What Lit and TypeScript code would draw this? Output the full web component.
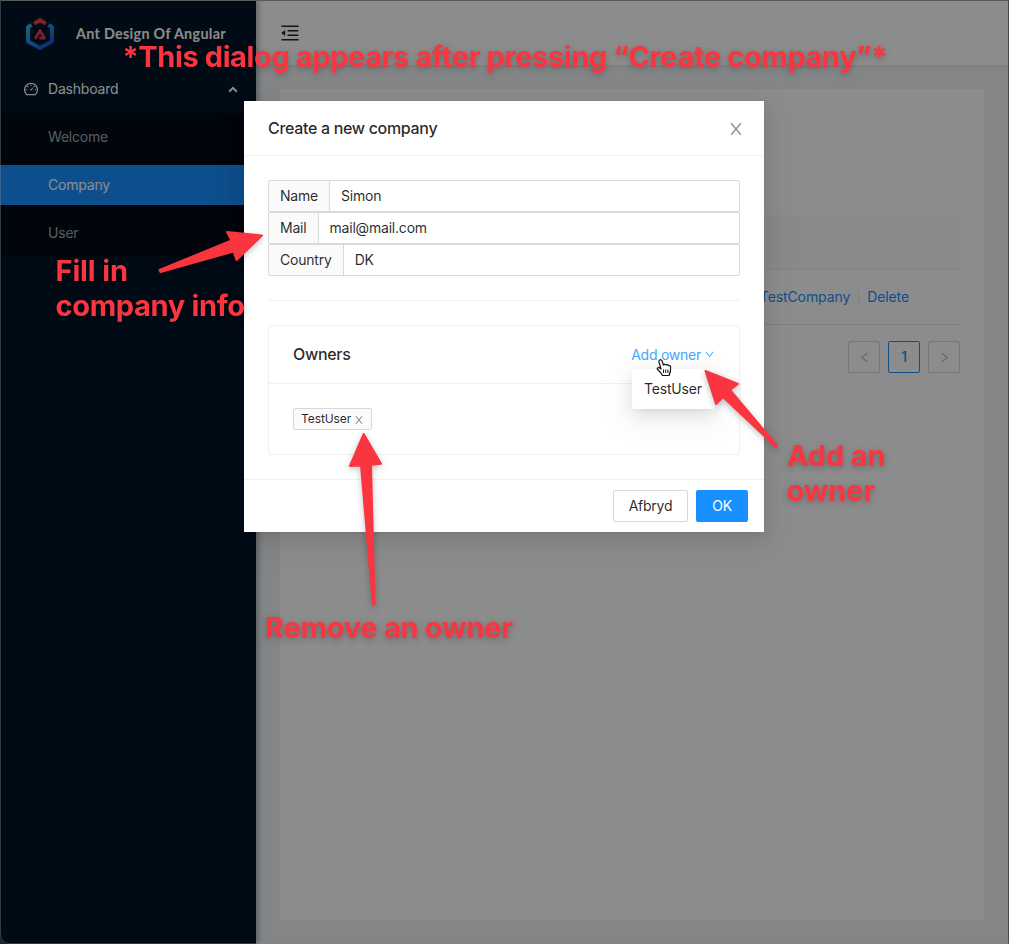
import { LitElement, html, css, svg } from "lit";
import { customElement, state } from "lit/decorators.js";

const ICONS = {
  fold: "M408 442h480c4.400 0 8-3.600 8-8v-56c0-4.400-3.600-8-8-8H408c-4.400 0-8 3.600-8 8v56c0 4.400 3.600 8 8 8zm-8 204c0 4.400 3.600 8 8 8h480c4.400 0 8-3.600 8-8v-56c0-4.400-3.600-8-8-8H408c-4.400 0-8 3.600-8 8v56zm504-486H120c-4.400 0-8 3.600-8 8v56c0 4.400 3.600 8 8 8h784c4.400 0 8-3.600 8-8v-56c0-4.400-3.600-8-8-8zm0 632H120c-4.400 0-8 3.600-8 8v56c0 4.400 3.600 8 8 8h784c4.400 0 8-3.600 8-8v-56c0-4.400-3.600-8-8-8zM115.400 518.900L271.700 642c5.800 4.600 14.400.5 14.400-6.900V388.900c0-7.400-8.500-11.500-14.400-6.900L115.400 505.100a8.740 8.740 0 000 13.800z",
  dashboard: "M924.8 385.6a446.7 446.7 0 00-96-142.4 446.7 446.7 0 00-142.4-96C631.1 123.8 572.5 112 512 112s-119.1 11.8-174.4 35.2a446.7 446.7 0 00-142.4 96 446.7 446.7 0 00-96 142.4C75.8 440.9 64 499.5 64 560c0 132.7 58.3 257.7 159.9 343.1l1.7 1.4c5.8 4.8 13.1 7.5 20.6 7.5h531.7c7.5 0 14.8-2.7 20.6-7.5l1.7-1.4C901.7 817.7 960 692.7 960 560c0-60.5-11.9-119.1-35.2-174.4zM761.4 836H262.6A371.12 371.12 0 01140 560c0-99.4 38.7-192.8 109-263 70.3-70.3 163.7-109 263-109 99.4 0 192.8 38.7 263 109 70.3 70.3 109 163.7 109 263 0 105.6-44.5 205.5-122.6 276zM623.5 421.5a8.03 8.03 0 00-11.3 0L527.7 506c-18.7-5-39.4-.2-54.1 14.5a55.95 55.95 0 000 79.2 55.95 55.95 0 0079.2 0 55.87 55.87 0 0014.5-54.1l84.5-84.5c3.1-3.1 3.1-8.2 0-11.3l-28.3-28.3zM490 320h44c4.4 0 8-3.6 8-8v-80c0-4.4-3.6-8-8-8h-44c-4.4 0-8 3.6-8 8v80c0 4.4 3.6 8 8 8zm260 218v44c0 4.4 3.6 8 8 8h80c4.4 0 8-3.6 8-8v-44c0-4.4-3.6-8-8-8h-80c-4.4 0-8 3.6-8 8zm12.7-197.2l-31.1-31.1a8.03 8.03 0 00-11.3 0l-56.6 56.6a8.03 8.03 0 000 11.3l31.1 31.1c3.1 3.1 8.2 3.1 11.3 0l56.6-56.6c3.1-3.1 3.1-8.2 0-11.3zm-458.6-31.1a8.03 8.03 0 00-11.3 0l-31.1 31.1a8.03 8.03 0 000 11.3l56.6 56.6c3.1 3.1 8.2 3.1 11.3 0l31.1-31.1c3.1-3.1 3.1-8.2 0-11.3l-56.6-56.6zM262 530h-80c-4.4 0-8 3.6-8 8v44c0 4.4 3.6 8 8 8h80c4.4 0 8-3.6 8-8v-44c0-4.4-3.6-8-8-8z",
  close: "M563.8 512l262.5-312.9c4.4-5.2.7-13.1-6.1-13.1h-79.8c-4.7 0-9.2 2.1-12.3 5.7L511.6 449.8 295.1 191.7c-3-3.6-7.5-5.7-12.3-5.7H203c-6.8 0-10.5 7.9-6.1 13.1L459.4 512 196.9 824.9A7.95 7.95 0 00203 838h79.8c4.7 0 9.2-2.1 12.3-5.7l216.5-258.1 216.5 258.1c3 3.6 7.5 5.7 12.3 5.7h79.8c6.8 0 10.5-7.9 6.1-13.1L563.8 512z",
  down: "M884 256h-75c-5.1 0-9.9 2.5-12.9 6.6L512 654.2 227.9 262.6c-3-4.1-7.8-6.6-12.9-6.6h-75c-6.5 0-10.3 7.4-6.5 12.7l352.6 486.1c12.8 17.6 39 17.6 51.7 0l352.6-486.1c3.9-5.3.1-12.7-6.4-12.7z",
  left: "M724 218.3V141c0-6.7-7.7-10.4-12.9-6.3L260.3 486.8a31.86 31.86 0 000 50.3l450.8 352.1c5.3 4.1 12.9.4 12.9-6.3v-77.3c0-4.9-2.3-9.6-6.1-12.6l-360-281 360-281.1c3.8-3 6.1-7.7 6.1-12.6z",
};

const icon = (name: keyof typeof ICONS, size: number, cls = "") => html`
  <svg class="icon ${cls}" width=${size} height=${size} viewBox="0 0 1024 1024" fill="currentColor">
    <path d=${ICONS[name]}></path>
  </svg>`;

const base = css`
  * { box-sizing: border-box; }
  .icon { display: block; flex: none; }
`;

@customElement("side-menu")
class SideMenu extends LitElement {
  static styles = [base, css`
    :host {
      display: block; width: 256px; flex: none; background: #001529; padding-top: 1px;
      box-shadow: 2px 0 6px rgba(0, 21, 41, 0.35); z-index: 2; position: relative; color: #fff;
    }
    .brand { display: flex; align-items: center; height: 64px; padding-left: 24px; }
    .name { margin-left: 20px; padding-top: 1px; font: 700 14.300px/20px Lato, sans-serif; letter-spacing: 0.320px; white-space: nowrap; }
    .group { display: flex; align-items: center; height: 40px; margin: 4px 0; padding: 0 17px 0 23px; }
    .group span { flex: 1; margin-left: 9px; }
    .sub { background: #000c17; padding: 4px 0; display: grid; gap: 8px; }
    .item { height: 40px; line-height: 40px; padding-left: 48px; color: rgba(255, 255, 255, 0.65); }
    .item.active { background: #1890ff; color: #fff; }
  `];
  items = ["Welcome", "Company", "User"];
  render() {
    return html`
      <div class="brand">
        <svg width="32" height="36" viewBox="0 0 32 36" fill="none" stroke-linecap="round" stroke-linejoin="round">
          <defs>
            <linearGradient id="g" x1="0" y1="0" x2="0.8" y2="1">
              <stop offset="0" stop-color="#24b8e6"></stop><stop offset="0.5" stop-color="#1890e8"></stop>
              <stop offset="1" stop-color="#0b52d0"></stop>
            </linearGradient>
          </defs>
          <path d="M7.500 10 L4 12 V26.500 L16 33 L28 26.500 V12 L24.500 10" stroke="url(#g)" stroke-width="4" stroke-linecap="butt"></path>
          <path d="M11.500 7.800 L16 5.300 L20.500 7.800" stroke="#e0454e" stroke-width="4"></path>
          <path d="M11.800 22.800 L16 15.500 L20.500 23 H16.500" stroke="#e0384a" stroke-width="2.800"></path>
        </svg>
        <div class="name">Ant Design Of Angular</div>
      </div>
      <div class="group">
        ${icon("dashboard", 16)}<span>Dashboard</span>
        <svg class="icon" width="12" height="8" viewBox="0 0 12 8"><path d="M2.200 6.700 L6 2.900 L9.800 6.700" fill="none" stroke="#fff" stroke-width="2"></path></svg>
      </div>
      <div class="sub">
        ${this.items.map((t) => html`<div class="item ${t === "Company" ? "active" : ""}">${t}</div>`)}
      </div>`;
  }
}

@customElement("company-page")
class CompanyPage extends LitElement {
  static styles = [base, css`
    :host { display: flex; flex-direction: column; flex: 1; background: #f0f2f5; }
    .top { height: 65px; padding-top: 1px; background: #fff; box-shadow: 0 1px 4px rgba(0, 21, 41, 0.08); display: flex; align-items: center; padding-left: 23px; color: rgba(0, 0, 0, 0.85); }
    .card { flex: 1; margin: 24px 25px 24px 24px; background: #fff; padding: 126px 24px 0; }
    .thead { height: 55px; background: #fafafa; border-bottom: 1px solid #f0f0f0; border-radius: 2px 2px 0 0; }
    .row { height: 55px; border-bottom: 1px solid #e8e8e8; display: flex; align-items: center; justify-content: flex-end; padding-right: 51px; color: #1890ff; letter-spacing: -0.100px; }
    .sep { width: 1px; height: 13px; background: rgba(0, 0, 0, 0.08); margin: 0 8px; }
    .pages { display: flex; justify-content: flex-end; gap: 8px; margin-top: 16px; }
    .page { width: 32px; height: 32px; border: 1px solid #d9d9d9; border-radius: 2px; display: grid; place-items: center; color: rgba(0, 0, 0, 0.3); }
    .page.on { border-color: #1890ff; color: #1890ff; font-weight: 500; }
    .flip { transform: scaleX(-1); }
  `];
  render() {
    return html`
      <div class="top">${icon("fold", 22)}</div>
      <div class="card">
        <div class="thead"></div>
        <div class="row"><span>TestCompany</span><i class="sep"></i><span>Delete</span></div>
        <div class="pages">
          <div class="page">${icon("left", 13)}</div>
          <div class="page on">1</div>
          <div class="page">${icon("left", 13, "flip")}</div>
        </div>
      </div>`;
  }
}

@customElement("company-dialog")
class CompanyDialog extends LitElement {
  static styles = [base, css`
    :host {
      display: block; width: 520px; background: #fff; color: rgba(0, 0, 0, 0.85);
      box-shadow: 0 3px 6px -4px rgba(0, 0, 0, 0.12), 0 6px 16px rgba(0, 0, 0, 0.08), 0 9px 28px 8px rgba(0, 0, 0, 0.05);
    }
    .head { display: flex; align-items: center; justify-content: space-between; height: 55px; padding: 0 19px 0 24px; border-bottom: 1px solid #f0f0f0; font-size: 16px; font-weight: 500; letter-spacing: -0.320px; }
    .head .icon { color: rgba(0, 0, 0, 0.45); margin-top: 2px; }
    .body { padding: 24px; }
    .field { display: flex; height: 32px; border: 1px solid #d9d9d9; border-radius: 2px; line-height: 30px; }
    .label { padding: 0 11px; background: #fafafa; border-right: 1px solid #d9d9d9; }
    .field input { flex: 1; min-width: 0; border: 0; outline: 0; padding: 0 11px; font: inherit; color: inherit; background: none; letter-spacing: inherit; }
    .rule { height: 1px; margin: 24px 0; background: #f0f0f0; }
    .card { border: 1px solid #f0f0f0; border-radius: 2px; }
    .chead { position: relative; display: flex; align-items: center; justify-content: space-between; height: 58px; padding: 0 24px; border-bottom: 1px solid #f0f0f0; }
    .title { font-size: 16px; font-weight: 500; letter-spacing: -0.320px; margin-bottom: 2px; }
    .add { display: flex; align-items: center; gap: 3px; color: #40a9ff; letter-spacing: -0.250px; }
    .menu { position: absolute; right: 24px; top: 43px; width: 83px; height: 40px; padding: 4px 12px; line-height: 32px; background: #fff; border-radius: 2px; box-shadow: 0 3px 6px -4px rgba(0, 0, 0, 0.12), 0 6px 16px rgba(0, 0, 0, 0.08), 0 9px 28px 8px rgba(0, 0, 0, 0.05); }
    .cbody { padding: 24px; display: flex; }
    .tag { display: flex; align-items: center; gap: 2px; width: 79px; height: 22px; padding: 0 6px 0 7px; border: 1px solid #d9d9d9; border-radius: 2px; background: #fafafa; font-size: 12px; letter-spacing: -0.080px; }
    .tag .icon { color: rgba(0, 0, 0, 0.45); margin-top: 1px; }
    .foot { display: flex; justify-content: flex-end; gap: 8px; padding: 10px 16px; border-top: 1px solid #f0f0f0; }
    .btn { width: 75px; height: 32px; border: 1px solid #d9d9d9; border-radius: 2px; background: #fff; padding: 0; font: inherit; color: inherit; letter-spacing: -0.250px; }
    .btn.ok { width: 52px; background: #1890ff; border-color: #1890ff; color: #fff; }
  `];
  @state() fields = [["Name", "Simon"], ["Mail", "mail@mail.com"], ["Country", "DK"]];
  render() {
    return html`
      <div class="head"><span>Create a new company</span>${icon("close", 18)}</div>
      <div class="body">
        ${this.fields.map(([l, v]) => html`
          <div class="field"><span class="label">${l}</span><input .value=${v}></div>`)}
        <div class="rule"></div>
        <div class="card">
          <div class="chead">
            <span class="title">Owners</span>
            <span class="add">Add owner ${icon("down", 11)}</span>
            <div class="menu">TestUser</div>
          </div>
          <div class="cbody"><span class="tag">TestUser ${icon("close", 12)}</span></div>
        </div>
      </div>
      <div class="foot"><button class="btn">Afbryd</button><button class="btn ok">OK</button></div>`;
  }
}

@customElement("app-root")
class AppRoot extends LitElement {
  static styles = [base, css`
    :host {
      display: block; position: relative; width: 1009px; height: 944px; overflow: hidden;
      font: 14px/22px Inter, "Liberation Sans", sans-serif; letter-spacing: -0.200px; color: rgba(0, 0, 0, 0.85);
    }
    .layout { display: flex; height: 944px; }
    .mask { position: absolute; inset: 0; z-index: 3; background: rgba(0, 0, 0, 0.45); display: flex; justify-content: center; align-items: flex-start; padding: 101px 1px 0 0; }
    .frame { position: absolute; inset: 0; z-index: 4; border: 1px solid rgba(120, 135, 140, 0.4); border-top-color: #5a5a5a; border-right-color: #414b50; border-bottom-left-radius: 9px; box-shadow: 0 0 0 9px #2b211f; pointer-events: none; }
    .notes { position: absolute; inset: 0; z-index: 5; pointer-events: none; }
    .ink { fill: #fa3540; stroke: #fa3540; stroke-width: 2; stroke-linejoin: round; filter: drop-shadow(0 2px 3px rgba(0, 0, 0, 0.25)); }
    .note { fill: #fa3540; font: 700 29px Inter, sans-serif; letter-spacing: 0; filter: drop-shadow(0 2px 3px rgba(0, 0, 0, 0.25)); }
  `];
  arrows = [
    "M262 235.500 L227 232 L231.500 240.500 L159.500 270 L160.500 272 L233.500 251.500 L236.500 260 Z",
    "M705.500 371 L738 384 L730 390 L777 445.500 L776 447 L723 397 L716 404 Z",
    "M363.700 434 L350 466 L361 465.500 L373 605 L374.500 605 L371 464.800 L381 463.800 Z",
  ];
  notes: [number, number, number, string][] = [
    [122.5, 67, 765, "*This dialog appears after pressing “Create company”*"],
    [55.5, 281, 72.5, "Fill in"],
    [55.5, 316, 189.5, "company info"],
    [787, 466, 98.5, "Add an"],
    [786.5, 501, 88.5, "owner"],
    [265, 638, 248, "Remove an owner"],
  ];
  render() {
    return html`
      <div class="layout"><side-menu></side-menu><company-page></company-page></div>
      <div class="mask"><company-dialog></company-dialog></div>
      <div class="frame"></div>
      <svg class="notes" width="1009" height="944" viewBox="0 0 1009 944">
        <path transform="translate(656 359)" fill="#fff" stroke="#111" stroke-width="1.200" stroke-linejoin="round"
          d="M3.500 1.200 Q5 0 6 1.800 L7.400 6 Q9 4.600 10 6 Q11.800 5 12.400 6.600 Q14.500 6 14.600 8.300 Q15 12.500 13 16.500 H6.600 Q4.500 13 1.500 10.500 Q0.500 8.500 3 8.600 L5 10 L3 3 Q2.700 1.800 3.500 1.200 Z"></path>
        <path transform="translate(656 359)" stroke="#111" stroke-width="1" d="M7.500 10.500 V14 M9.700 10.500 V14 M11.900 10.500 V14"></path>
        ${this.arrows.map((d) => svg`<path class="ink" d=${d}></path>`)}
        ${this.notes.map(([x, y, w, t]) => svg`<text class="note" x=${x} y=${y} textLength=${w}>${t}</text>`)}
      </svg>`;
  }
}
